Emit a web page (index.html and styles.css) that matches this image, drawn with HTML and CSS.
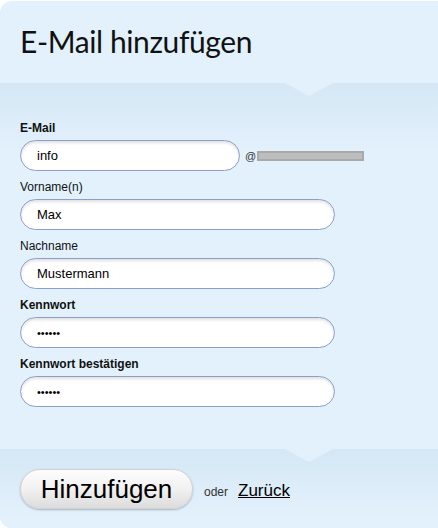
FILE: index.html
```html
<!DOCTYPE html>
<html>
<head>
    <meta charset="utf-8">
    <title>E-Mail hinzufügen</title>
    <link rel="stylesheet" href="styles.css">
</head>
<body>
    <div class="panel">
        <div class="panel-head">
            <h1>E-Mail hinzufügen</h1>
        </div>

        <form class="panel-body notched" action="#" method="post">
            <div class="form-group">
                <label class="strong">E-Mail</label>
                <div class="mail-row">
                    <input type="text" class="short" name="local" value="info">
                    <span class="domain">@<span class="hidden-domain"></span></span>
                </div>
            </div>
            <div class="form-group">
                <label>Vorname(n)</label>
                <input type="text" name="firstname" value="Max">
            </div>
            <div class="form-group">
                <label>Nachname</label>
                <input type="text" name="lastname" value="Mustermann">
            </div>
            <div class="form-group">
                <label class="strong">Kennwort</label>
                <input type="password" name="password" value="secret">
            </div>
            <div class="form-group">
                <label class="strong">Kennwort bestätigen</label>
                <input type="password" name="password2" value="secret">
            </div>
        </form>

        <div class="panel-foot notched">
            <button type="submit">Hinzufügen</button>
            <span class="or">oder</span>
            <a href="#" class="back">Zurück</a>
        </div>
    </div>
</body>
</html>
```

FILE: styles.css
```css
body { margin: 0; background: #fff; font-family: "Liberation Sans", Arial, sans-serif; }
.panel { margin-top: 1px; height: 527px; background: #e3f1fc; border-radius: 12px 0 0 12px; overflow: hidden; }
.panel-head { height: 82px; padding-left: 20px; box-sizing: border-box; }
.panel-head h1 { margin: 0; padding-top: 22px; font-family: Lato, "DejaVu Sans", sans-serif; font-weight: normal; font-size: 30px; letter-spacing: -0.4px; color: #111; }

/* darker band with a little arrow cut in at the top */
.notched { position: relative; background: linear-gradient(#d5e7f5, #e3f1fc 70px); }
.notched::before { content: ""; position: absolute; top: 0; left: 285px; width: 48px; height: 13px; background: #e3f1fc; clip-path: polygon(0 0, 100% 0, 50% 100%); }

.panel-body { display: block; padding: 38px 0 32px 20px; height: 366px; box-sizing: border-box; }
.form-group { margin-bottom: 9px; }
.form-group label { display: block; height: 15px; line-height: 15px; margin-bottom: 4px; font-size: 12px; color: #111; }
.form-group label.strong { font-weight: bold; }

input { display: block; width: 315px; height: 31px; box-sizing: border-box; padding: 0 16px; border: 1px solid #8b9fca; border-radius: 16px; background: #fff; box-shadow: inset 0 2px 3px rgba(0, 0, 0, 0.12); font-family: "Liberation Sans", Arial, sans-serif; font-size: 13px; color: #000; outline: none; }
input[type=password] { font-size: 11px; letter-spacing: 0; }
input.short { width: 220px; }

.mail-row { display: flex; align-items: center; }
.domain { display: flex; align-items: center; margin-left: 5px; font-size: 11px; color: #333; }
.hidden-domain { display: inline-block; width: 103px; height: 6px; margin-left: 1px; background: #bdbdbd; border: 2px solid #a9a9a9; }

.panel-foot { height: 80px; padding: 20px 0 0 20px; box-sizing: border-box; display: flex; align-items: flex-start; }
button { width: 173px; height: 40px; border: 1px solid #d2d2d2; border-radius: 20px; background: linear-gradient(#fdfdfd, #f1f1f1 50%, #dcdcdc); box-shadow: 0 1px 2px rgba(0, 0, 0, 0.25); font-family: "Liberation Sans", Arial, sans-serif; font-size: 26px; color: #000; cursor: pointer; padding: 0; }
.or { margin: 16px 0 0 11px; font-size: 12px; color: #333; }
.back { margin: 12px 0 0 10px; font-size: 17px; color: #000; }
```
